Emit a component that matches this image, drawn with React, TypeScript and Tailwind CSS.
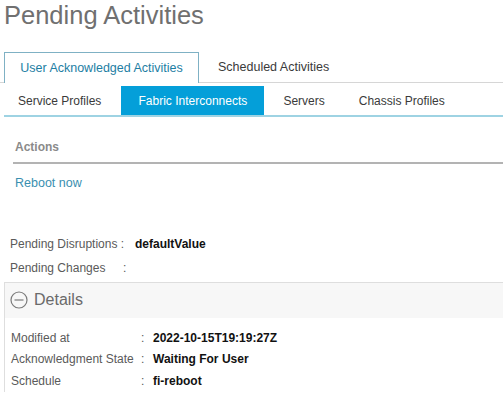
import React from "react";

export default function App() {
  return (
    <div className="w-[503px] h-[397px] overflow-hidden bg-white text-[#58585b]" style={{ fontFamily: '"Liberation Sans", Arial, sans-serif' }}>
      <div className="pl-[4px] pt-[1px] text-[25.5px] font-light text-[#707070] leading-[28px]">Pending Activities</div>
      <div className="mt-[23px] flex items-end pl-[4px] border-b border-[#d6d6d6] h-[31px]">
        <div className="h-[31px] w-[195px] border border-b-0 border-[#7fb1c4] bg-white flex items-center justify-center text-[12.5px] text-[#1d7ea3] -mb-px">User Acknowledged Activities</div>
        <div className="h-[30px] flex items-center pl-[19px] text-[12.5px] text-[#3a3a3a]">Scheduled Activities</div>
      </div>
      <div className="ml-[4px] mt-[3px] flex h-[31px] border-b-2 border-[#9ed3e3] text-[12px] text-[#3a3a3a]">
        <div className="flex items-center pl-[14px] pr-[20px]">Service Profiles</div>
        <div className="flex items-center justify-center w-[143px] bg-[#049fd9] text-white">Fabric Interconnects</div>
        <div className="flex items-center pl-[19px] pr-[19px]">Servers</div>
        <div className="flex items-center pl-[15px]">Chassis Profiles</div>
      </div>
      <div className="ml-[13px] mt-[21px] pl-[2px] pb-[6px] border-b-2 border-[#b3b3b3] text-[12px] font-bold text-[#8a8a8a]">Actions</div>
      <div className="ml-[15px] mt-[10px] text-[12.5px] text-[#3a8fb0]">Reboot now</div>
      <div className="ml-[10px] mt-[39px] text-[12px] text-[#5a5a5a] leading-[24px]">
        <div className="flex"><span className="w-[125px]">Pending Disruptions :</span><span className="font-bold text-[#111]">defaultValue</span></div>
        <div className="flex"><span className="w-[113px]">Pending Changes</span><span>:</span></div>
      </div>
      <div className="ml-[4px] mt-[2px] border-l border-t border-[#dedede]">
        <div className="h-[35px] bg-[#f7f7f7] flex items-center pl-[5px] gap-[6px] text-[16px] text-[#6a6a6a]">
          <svg width="18" height="18" viewBox="0 0 18 18" fill="none">
            <circle cx="9" cy="9" r="8" stroke="#7a7a7a" strokeWidth="1.2" />
            <line x1="4.5" y1="9" x2="13.5" y2="9" stroke="#7a7a7a" strokeWidth="1.2" />
          </svg>
          <span>Details</span>
        </div>
        <div className="pl-[6px] pt-[10px] text-[12px] text-[#5a5a5a] leading-[21.5px]">
          <div className="flex"><span className="w-[130px]">Modified at</span><span className="w-[12px]">:</span><span className="font-bold text-[#111]">2022-10-15T19:19:27Z</span></div>
          <div className="flex"><span className="w-[130px]">Acknowledgment State</span><span className="w-[12px]">:</span><span className="font-bold text-[#111]">Waiting For User</span></div>
          <div className="flex"><span className="w-[130px]">Schedule</span><span className="w-[12px]">:</span><span className="font-bold text-[#111]">fi-reboot</span></div>
        </div>
      </div>
    </div>
  );
}
